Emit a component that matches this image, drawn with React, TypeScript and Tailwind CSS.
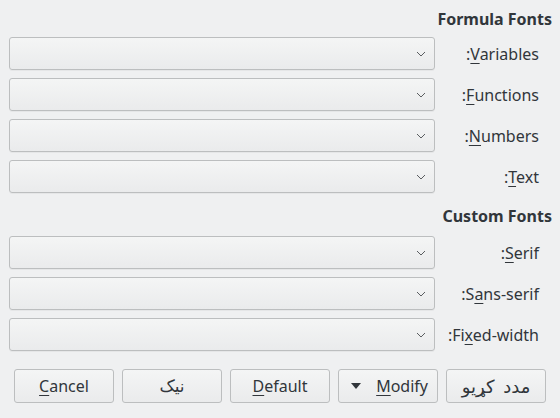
import React from "react";

function Chevron() {
  return (
    <svg width="10" height="6" viewBox="0 0 10 6" className="shrink-0">
      <path d="M1 1 L5 5 L9 1" fill="none" stroke="#5a5d60" strokeWidth="1" />
    </svg>
  );
}

function Combo() {
  return (
    <div className="ml-[9px] w-[426px] h-[33px] shrink-0 rounded-[3px] border border-[#bcbebf] bg-gradient-to-b from-[#f4f5f5] to-[#eaebec] flex items-center justify-end pr-[8px] shadow-[0_1px_0_rgba(0,0,0,0.04)]">
      <Chevron />
    </div>
  );
}

function Row({ pre, u, post }: { pre: string; u: string; post: string }) {
  return (
    <div className="flex items-center h-[33px]">
      <Combo />
      <div className="flex-1 text-right pr-[21px] whitespace-nowrap">
        {":" + pre}
        <span className="underline underline-offset-[3px] decoration-1">{u}</span>
        {post}
      </div>
    </div>
  );
}

function Btn({ children }: { children: React.ReactNode }) {
  return (
    <div className="w-[100px] h-[34px] rounded-[3px] border border-[#bcbebf] bg-gradient-to-b from-[#f4f5f5] to-[#eaebec] flex items-center justify-center whitespace-nowrap">
      {children}
    </div>
  );
}

export default function App() {
  return (
    <div className="w-[560px] h-[418px] bg-[#eff0f1] text-[#31363b] text-[16px] font-['Noto_Sans','DejaVu_Sans',sans-serif] flex flex-col overflow-hidden">
      <div className="h-[37px] flex items-center justify-end pr-[8px] font-bold">Formula Fonts</div>
      <div className="flex flex-col gap-[8px]">
        <Row pre="" u="V" post="ariables" />
        <Row pre="" u="F" post="unctions" />
        <Row pre="" u="N" post="umbers" />
        <Row pre="" u="T" post="ext" />
      </div>
      <div className="h-[43px] flex items-center justify-end pr-[8px] pt-[3px] font-bold">Custom Fonts</div>
      <div className="flex flex-col gap-[8px]">
        <Row pre="" u="S" post="erif" />
        <Row pre="S" u="a" post="ns-serif" />
        <Row pre="Fi" u="x" post="ed-width" />
      </div>
      <div className="mt-[18px] ml-[14px] flex gap-[8px]">
        <Btn>
          <span className="underline underline-offset-[3px] decoration-1">C</span>ancel
        </Btn>
        <Btn>
          <span dir="rtl" className="text-[17px]">نیک</span>
        </Btn>
        <Btn>
          <span className="underline underline-offset-[3px] decoration-1">D</span>efault
        </Btn>
        <Btn>
          <div className="flex items-center w-full pl-[12px] pr-[9px] justify-between">
            <svg width="10" height="6" viewBox="0 0 10 6">
              <path d="M0 0 L10 0 L5 6 Z" fill="#31363b" />
            </svg>
            <span>
              <span className="underline underline-offset-[3px] decoration-1">M</span>odify
            </span>
          </div>
        </Btn>
        <Btn>
          <span dir="rtl" className="text-[18px] [word-spacing:4px]">مدد کړیو</span>
        </Btn>
      </div>
    </div>
  );
}
